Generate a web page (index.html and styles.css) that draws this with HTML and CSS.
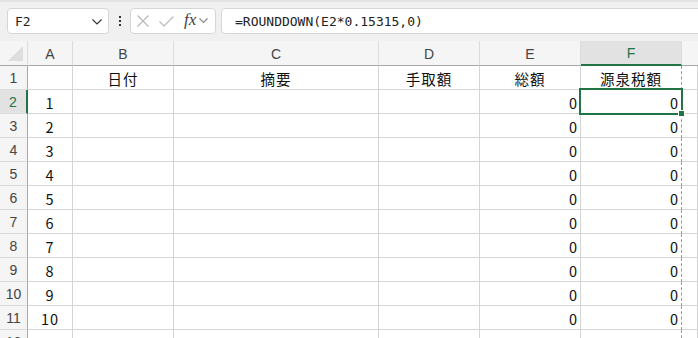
FILE: index.html
```html
<!DOCTYPE html>
<html lang="ja">
<head>
<meta charset="utf-8">
<link rel="stylesheet" href="styles.css">
</head>
<body>
<div class="toolbar">
  <div class="namebox">
    <span class="ref">F2</span>
    <svg class="chev" width="10" height="6" viewBox="0 0 10 6"><polyline points="0.5,0.5 5,5 9.5,0.5" fill="none" stroke="#333" stroke-width="1.2"/></svg>
  </div>
  <div class="dots"><i></i><i></i><i></i></div>
  <div class="fbtns">
    <svg class="ix" width="12" height="12" viewBox="0 0 12 12"><path d="M0.5 0.5L11.5 11.5M11.5 0.5L0.5 11.5" stroke="#b8b8b8" stroke-width="1.1" fill="none"/></svg>
    <svg class="ick" width="15" height="11" viewBox="0 0 15 11"><polyline points="0.5,5.5 5,10 14.5,0.5" fill="none" stroke="#b8b8b8" stroke-width="1.1"/></svg>
    <span class="fx">fx</span>
    <svg class="chev2" width="9" height="6" viewBox="0 0 9 6"><polyline points="0.5,0.5 4.5,4.5 8.5,0.5" fill="none" stroke="#888" stroke-width="1.1"/></svg>
  </div>
  <div class="formula">=ROUNDDOWN(E2*0.15315,0)</div>
</div>
<div class="sheet">
  <div class="ch corner"><span class="tri"></span></div>
  <div class="ch">A</div>
  <div class="ch">B</div>
  <div class="ch">C</div>
  <div class="ch">D</div>
  <div class="ch">E</div>
  <div class="ch chsel">F</div>
  <div class="ch chlast"></div>

  <div class="rh">1</div>
  <div class="c"></div>
  <div class="c ctr">日付</div>
  <div class="c ctr">摘要</div>
  <div class="c ctr">手取額</div>
  <div class="c ctr">総額</div>
  <div class="c ctr pb">源泉税額</div>
  <div class="c"></div>

  <div class="rh rhsel">2</div>
  <div class="c ctr">1</div>
  <div class="c"></div>
  <div class="c"></div>
  <div class="c"></div>
  <div class="c num">0</div>
  <div class="c num pb sel">0</div>
  <div class="c"></div>

  <div class="rh">3</div><div class="c ctr">2</div><div class="c"></div><div class="c"></div><div class="c"></div><div class="c num">0</div><div class="c num pb">0</div><div class="c"></div>
  <div class="rh">4</div><div class="c ctr">3</div><div class="c"></div><div class="c"></div><div class="c"></div><div class="c num">0</div><div class="c num pb">0</div><div class="c"></div>
  <div class="rh">5</div><div class="c ctr">4</div><div class="c"></div><div class="c"></div><div class="c"></div><div class="c num">0</div><div class="c num pb">0</div><div class="c"></div>
  <div class="rh">6</div><div class="c ctr">5</div><div class="c"></div><div class="c"></div><div class="c"></div><div class="c num">0</div><div class="c num pb">0</div><div class="c"></div>
  <div class="rh">7</div><div class="c ctr">6</div><div class="c"></div><div class="c"></div><div class="c"></div><div class="c num">0</div><div class="c num pb">0</div><div class="c"></div>
  <div class="rh">8</div><div class="c ctr">7</div><div class="c"></div><div class="c"></div><div class="c"></div><div class="c num">0</div><div class="c num pb">0</div><div class="c"></div>
  <div class="rh">9</div><div class="c ctr">8</div><div class="c"></div><div class="c"></div><div class="c"></div><div class="c num">0</div><div class="c num pb">0</div><div class="c"></div>
  <div class="rh">10</div><div class="c ctr">9</div><div class="c"></div><div class="c"></div><div class="c"></div><div class="c num">0</div><div class="c num pb">0</div><div class="c"></div>
  <div class="rh">11</div><div class="c ctr">10</div><div class="c"></div><div class="c"></div><div class="c"></div><div class="c num">0</div><div class="c num pb">0</div><div class="c"></div>
  <div class="rh">12</div><div class="c ctr">11</div><div class="c"></div><div class="c"></div><div class="c"></div><div class="c num">0</div><div class="c num pb">0</div><div class="c"></div>
</div>
</body>
</html>
```
FILE: styles.css
```css
html, body {
  margin: 0;
  padding: 0;
  width: 698px;
  height: 338px;
  overflow: hidden;
  background: #ffffff;
}

.toolbar {
  box-sizing: border-box;
  height: 41px;
  border-top: 2px solid #e3e3e3;
  background: #f0f0f0;
  padding-top: 6px;
  display: flex;
  align-items: flex-start;
  overflow: hidden;
}

.namebox {
  box-sizing: border-box;
  margin-left: 7px;
  width: 102px;
  height: 26px;
  background: #fff;
  border: 1px solid #d6d6d6;
  border-radius: 4px;
  display: flex;
  align-items: center;
  padding-left: 7px;
  padding-right: 6px;
}

.ref {
  font-family: "DejaVu Sans Mono", "Liberation Mono", monospace;
  font-size: 13px;
  color: #222;
  flex: 1;
}

.chev { margin-top: 1px; }

.dots {
  width: 21px;
  height: 26px;
  display: flex;
  flex-direction: column;
  align-items: center;
  justify-content: center;
  gap: 2px;
}
.dots i {
  display: block;
  width: 2px;
  height: 2px;
  background: #333;
}

.fbtns {
  box-sizing: border-box;
  width: 86px;
  height: 26px;
  background: #fff;
  border: 1px solid #d6d6d6;
  border-radius: 4px;
  display: flex;
  align-items: center;
  padding-left: 6px;
}
.ix { margin-right: 10px; }
.ick { margin-right: 10px; }
.fx {
  font-family: "Liberation Serif", "DejaVu Serif", serif;
  font-style: italic;
  font-size: 17px;
  color: #444;
  margin-right: 3px;
  margin-top: -2px;
}

.formula {
  box-sizing: border-box;
  margin-left: 5px;
  margin-right: -6px;
  flex: 1;
  height: 26px;
  background: #fff;
  border: 1px solid #d6d6d6;
  border-radius: 4px;
  padding-left: 13px;
  display: flex;
  align-items: center;
  font-family: "DejaVu Sans Mono", "Liberation Mono", monospace;
  font-size: 13px;
  color: #222;
}

.sheet {
  display: grid;
  grid-template-columns: 28px 45px 101px 205px 101px 101px 101px 1fr;
  grid-template-rows: 25px;
  grid-auto-rows: 24px;
}

.sheet > div {
  box-sizing: border-box;
  border-right: 1px solid #d4d4d4;
  border-bottom: 1px solid #d4d4d4;
  display: flex;
  align-items: center;
  overflow: visible;
}

.ch {
  background: #f5f5f5;
  justify-content: center;
  font-family: "Liberation Sans", "Noto Sans", sans-serif;
  font-size: 14px;
  color: #444;
  border-right-color: #dcdcdc !important;
  border-bottom-color: #a8a8a8 !important;
  padding-top: 1px;
}
.chlast { border-right: none !important; }

.corner {
  position: relative;
}
.tri {
  position: absolute;
  right: 4px;
  bottom: 4px;
  width: 0;
  height: 0;
  border-left: 15px solid transparent;
  border-bottom: 15px solid #dedede;
}

.chsel {
  background: #e2e2e2;
  color: #217346;
  border-bottom: 2px solid #217346 !important;
}

.rh {
  background: #f5f5f5;
  justify-content: center;
  font-family: "Liberation Sans", "Noto Sans", sans-serif;
  font-size: 14px;
  color: #444;
  border-right-color: #a8a8a8 !important;
  border-bottom-color: #dcdcdc !important;
}
.rhsel {
  background: #e2e2e2;
  color: #217346;
  border-right: 2px solid #217346 !important;
}

.c {
  background: #fff;
  font-family: "Noto Sans CJK JP", "Noto Sans", sans-serif;
  font-size: 14.5px;
  color: #111;
  padding-top: 2px;
}
.ctr { justify-content: center; letter-spacing: 1px; }
.num { justify-content: flex-end; padding-right: 3px; }

.pb {
  border-right: 1px dashed #9a9a9a !important;
}

.sel {
  position: relative;
}
.sel::after {
  content: "";
  position: absolute;
  top: -2px;
  left: -2px;
  right: -2px;
  bottom: -2px;
  border: 2px solid #217346;
  z-index: 2;
}
.sel::before {
  content: "";
  position: absolute;
  right: -4px;
  bottom: -4px;
  width: 5px;
  height: 5px;
  background: #217346;
  border: 1px solid #fff;
  z-index: 3;
}
```
